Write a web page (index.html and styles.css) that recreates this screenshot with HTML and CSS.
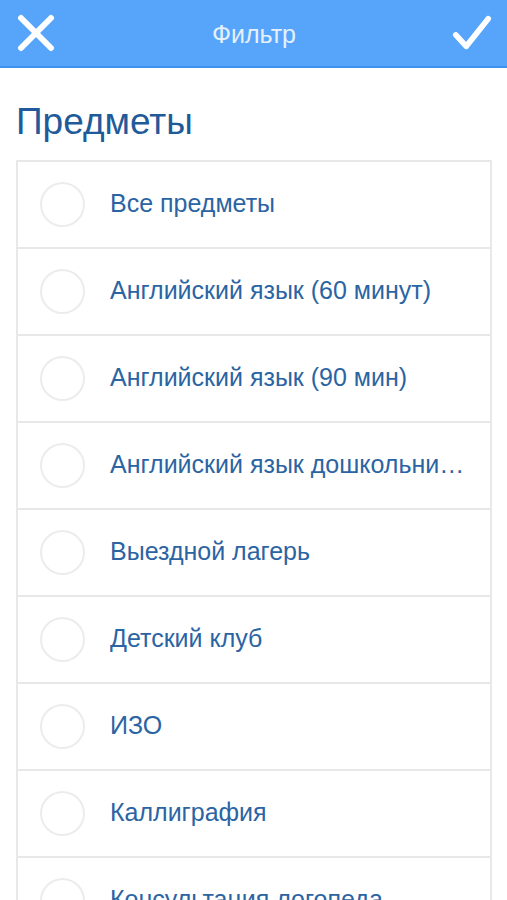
FILE: index.html
```html
<!DOCTYPE html>
<html lang="ru">
<head>
    <meta charset="UTF-8">
    <meta name="viewport" content="width=device-width, initial-scale=1.0">
    <link rel="stylesheet" href="styles.css">
</head>
<body>
    <header class="topbar">
        <button class="icon-btn" aria-label="Закрыть">
            <svg width="38" height="38" viewBox="0 0 38 38">
                <path d="M4 4 L34 34 M34 4 L4 34" stroke="#fff" stroke-width="6" stroke-linecap="round"/>
            </svg>
        </button>
        <h1 class="title">Фильтр</h1>
        <button class="icon-btn" aria-label="Готово">
            <svg width="42" height="40" viewBox="0 0 42 40">
                <path d="M4 22 L15 34 L38 5" fill="none" stroke="#fff" stroke-width="6" stroke-linecap="round" stroke-linejoin="round"/>
            </svg>
        </button>
    </header>

    <main class="content">
        <h2 class="section-title">Предметы</h2>
        <ul class="options">
            <li class="option"><span class="radio"></span><span class="label">Все предметы</span></li>
            <li class="option"><span class="radio"></span><span class="label">Английский язык (60 минут)</span></li>
            <li class="option"><span class="radio"></span><span class="label">Английский язык (90 мин)</span></li>
            <li class="option"><span class="radio"></span><span class="label">Английский язык дошкольников</span></li>
            <li class="option"><span class="radio"></span><span class="label">Выездной лагерь</span></li>
            <li class="option"><span class="radio"></span><span class="label">Детский клуб</span></li>
            <li class="option"><span class="radio"></span><span class="label">ИЗО</span></li>
            <li class="option"><span class="radio"></span><span class="label">Каллиграфия</span></li>
            <li class="option"><span class="radio"></span><span class="label">Консультация логопеда</span></li>
        </ul>
    </main>
</body>
</html>
```

FILE: styles.css
```css
html, body {
    margin: 0;
    padding: 0;
    background-color: #fff;
    font-family: "Liberation Sans", Arial, sans-serif;
    height: 900px;
    overflow: hidden;
}

.topbar {
    height: 66px;
    background-color: #56a5fa;
    border-bottom: 2px solid #3f93ee;
    display: flex;
    align-items: center;
    justify-content: space-between;
    padding: 0 15px 0 16px;
}

.icon-btn {
    background: none;
    border: none;
    padding: 0;
    display: flex;
    align-items: center;
    justify-content: center;
    width: 40px;
    height: 40px;
}

.title {
    margin: 2px 0 0;
    color: #e6f0fc;
    font-size: 25px;
    font-weight: normal;
}

.content {
    padding: 0 15px 0 16px;
}

.section-title {
    margin: 0;
    padding: 32px 0 16px 0;
    font-size: 37px;
    font-weight: normal;
    color: #1f5a9a;
    line-height: 44px;
}

.options {
    list-style: none;
    margin: 0;
    padding: 0;
    border: 2px solid #e8e8e8;
    border-bottom: none;
}

.option {
    height: 85px;
    border-bottom: 2px solid #e8e8e8;
    display: flex;
    align-items: center;
    padding-left: 22px;
}

.radio {
    flex: none;
    width: 41px;
    height: 41px;
    border: 2px solid #ececec;
    border-radius: 50%;
    margin-right: 25px;
}

.label {
    font-size: 25px;
    color: #2b64a3;
    white-space: nowrap;
    overflow: hidden;
    text-overflow: ellipsis;
    margin-right: 24px;
    margin-bottom: 3px;
}
```
